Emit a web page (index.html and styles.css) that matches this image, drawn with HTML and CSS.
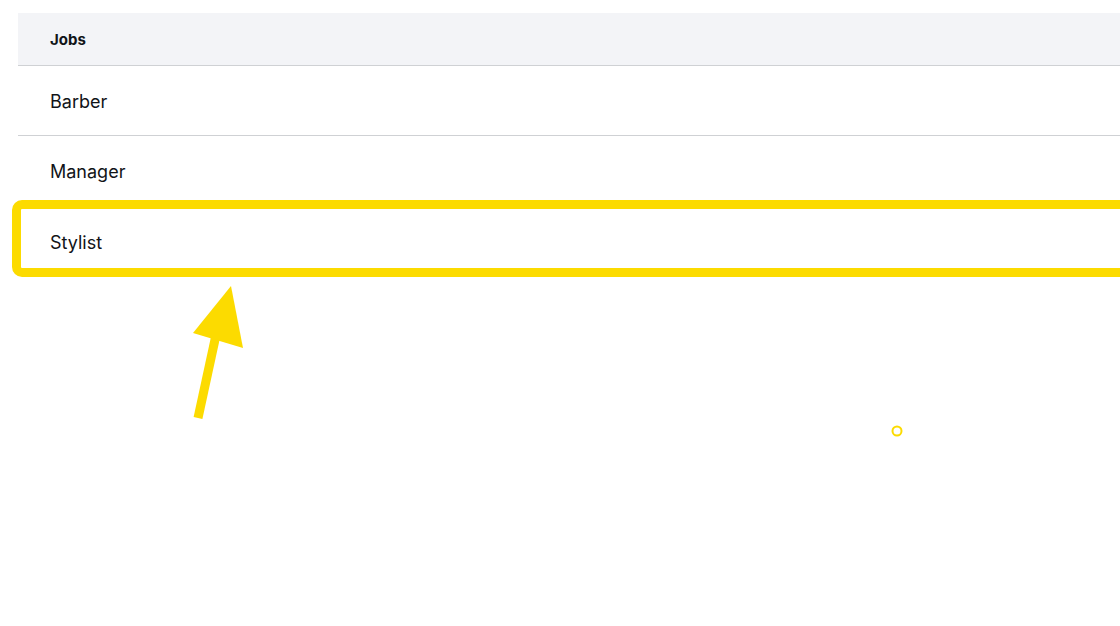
FILE: index.html
```html
<!DOCTYPE html>
<html>
<head>
<meta charset="utf-8">
<link rel="stylesheet" href="styles.css">
</head>
<body>
<div class="page">
  <div class="table">
    <div class="head">Jobs</div>
    <div class="row">Barber</div>
    <div class="row">Manager</div>
    <div class="row last">Stylist</div>
  </div>
  <div class="highlight"></div>
  <svg class="annot" width="1120" height="626" viewBox="0 0 1120 626">
    <line x1="198" y1="418" x2="216" y2="335" stroke="#fcdb00" stroke-width="9"/>
    <polygon points="231,286 193,333 243,348" fill="#fcdb00"/>
    <circle cx="897" cy="431" r="4.5" fill="none" stroke="#fcdb00" stroke-width="2"/>
  </svg>
</div>
</body>
</html>
```
FILE: styles.css
```css
html, body {
  margin: 0;
  padding: 0;
  background: #fff;
}
.page {
  position: relative;
  width: 1120px;
  height: 626px;
  overflow: hidden;
  padding-top: 13px;
  padding-left: 18px;
  box-sizing: border-box;
  font-family: Inter, "Noto Sans", sans-serif;
  color: #111418;
}
.table {
  width: 1200px;
}
.head {
  height: 52px;
  box-sizing: border-box;
  padding-top: 1px;
  background: #f3f4f7;
  border-bottom: 1px solid #cfd1d4;
  display: flex;
  align-items: center;
  padding-left: 32px;
  font-size: 15px;
  font-weight: 700;
}
.row {
  height: 69px;
  box-sizing: border-box;
  padding-top: 2px;
  border-bottom: 1px solid #cfd1d4;
  display: flex;
  align-items: center;
  padding-left: 32px;
  font-size: 18px;
}
.head, .row {
  height: auto;
}
.head { min-height: 53px; }
.row { min-height: 70px; }
.row.last {
  border-bottom: none;
}
.highlight {
  position: absolute;
  left: 12px;
  top: 200px;
  width: 1200px;
  height: 77px;
  box-sizing: border-box;
  border: 9px solid #fcdb00;
  border-radius: 10px;
}
.annot {
  position: absolute;
  left: 0;
  top: 0;
}
```
